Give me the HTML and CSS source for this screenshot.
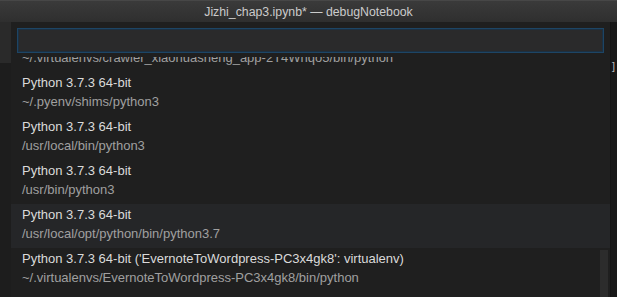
FILE: index.html
```html
<!DOCTYPE html>
<html lang="en">
<head>
    <meta charset="UTF-8">
    <meta name="viewport" content="width=device-width, initial-scale=1.0">
    <title>Jizhi_chap3.ipynb* — debugNotebook</title>
    <link rel="stylesheet" href="styles.css">
</head>
<body>
    <div class="titlebar">Jizhi_chap3.ipynb* — debugNotebook</div>
    <div class="workspace">
        <div class="gutter"><div class="gutter-top"></div></div>
        <div class="picker">
            <div class="input"></div>
            <div class="list">
                <div class="rows">
                    <div class="item">
                        <div class="label">Python 3.7.3 64-bit ('crawler_xiaohuasheng_app-2T4Wnqo5': virtualenv)</div>
                        <div class="desc">~/.virtualenvs/crawler_xiaohuasheng_app-2T4Wnqo5/bin/python</div>
                    </div>
                    <div class="item">
                        <div class="label">Python 3.7.3 64-bit</div>
                        <div class="desc">~/.pyenv/shims/python3</div>
                    </div>
                    <div class="item">
                        <div class="label">Python 3.7.3 64-bit</div>
                        <div class="desc">/usr/local/bin/python3</div>
                    </div>
                    <div class="item">
                        <div class="label">Python 3.7.3 64-bit</div>
                        <div class="desc">/usr/bin/python3</div>
                    </div>
                    <div class="item hover">
                        <div class="label">Python 3.7.3 64-bit</div>
                        <div class="desc">/usr/local/opt/python/bin/python3.7</div>
                    </div>
                    <div class="item">
                        <div class="label">Python 3.7.3 64-bit ('EvernoteToWordpress-PC3x4gk8': virtualenv)</div>
                        <div class="desc">~/.virtualenvs/EvernoteToWordpress-PC3x4gk8/bin/python</div>
                    </div>
                </div>
                <div class="scrollbar"></div>
            </div>
        </div>
        <div class="side"><span class="bracket">]</span></div>
    </div>
</body>
</html>
```

FILE: styles.css
```css
body {
    margin: 0;
    background-color: #1c1c1c;
    font-family: "Liberation Sans", Arial, sans-serif;
    font-size: 13px;
    overflow: hidden;
}
.titlebar {
    height: 22px;
    line-height: 22px;
    text-align: center;
    font-size: 12.3px;
    color: #cbcbcb;
    background: linear-gradient(#3a3a3a, #2f2f2f);
    border-top: 1px solid #474747;
    box-sizing: border-box;
}
.workspace {
    display: flex;
    height: 275px;
}
.gutter {
    width: 11px;
    background-color: #1d1d1d;
}
.gutter-top {
    height: 41px;
    background-color: #2a2a2a;
}
.picker {
    flex: 1;
    display: flex;
    flex-direction: column;
    background-color: #1f1f1f;
    padding: 6px 0 0 0;
    min-width: 0;
}
.input {
    height: 25px;
    margin: 0 6px 4px 6px;
    border: 1px solid #1d4565;
    box-shadow: inset 0 0 0 1px #1c3042;
    background-color: #2a2a2b;
    box-sizing: border-box;
}
.list {
    flex: 1;
    overflow: hidden;
    position: relative;
}
.rows {
    margin-top: -29px;
}
.item {
    height: 44px;
    padding: 2px 11px 0 11px;
    box-sizing: border-box;
    white-space: nowrap;
}
.item.hover {
    background-color: #252628;
}
.label {
    line-height: 18px;
    color: #dadada;
}
.desc {
    line-height: 19px;
    color: #a0a0a0;
}
.scrollbar {
    position: absolute;
    right: 2px;
    top: 193px;
    width: 8px;
    height: 60px;
    background-color: #2c2c2c;
}
.side {
    width: 6px;
    background-color: #181818;
    border-left: 1px solid #141414;
    color: #bbb;
    font-size: 11px;
    overflow: hidden;
}
.bracket {
    display: block;
    margin-top: 38px;
    margin-left: 1px;
}
```
